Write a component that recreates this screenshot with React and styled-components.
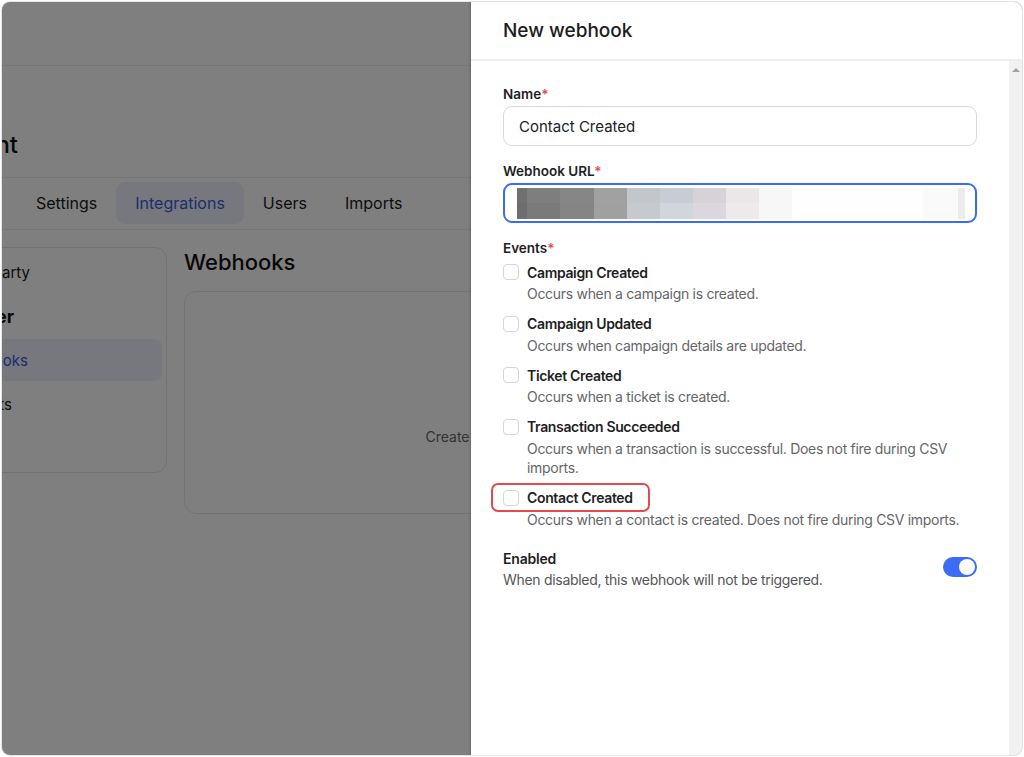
import React from 'react';
import styled, { createGlobalStyle } from 'styled-components';

const GlobalStyle = createGlobalStyle`
  * { box-sizing: border-box; }
  html, body { margin: 0; padding: 0; background: #ffffff; }
  body { font-family: 'Inter', 'Liberation Sans', sans-serif; }
`

const EVENTS = [
  { title: 'Campaign Created', desc: 'Occurs when a campaign is created.' },
  { title: 'Campaign Updated', desc: 'Occurs when campaign details are updated.' },
  { title: 'Ticket Created', desc: 'Occurs when a ticket is created.' },
  { title: 'Transaction Succeeded', desc: 'Occurs when a transaction is successful. Does not fire during CSV imports.' },
  { title: 'Contact Created', desc: 'Occurs when a contact is created. Does not fire during CSV imports.', marked: true },
]

// pixelated url: [width, top colour, bottom colour]
const BLUR = [
  [10, '#707070', '#6e6e6e'],
  [33, '#7e7e7e', '#7a7a7a'],
  [34, '#868686', '#858585'],
  [33, '#a1a1a1', '#a0a0a0'],
  [33, '#c3c6cb', '#c6c9cd'],
  [33, '#c8cdd5', '#d1d5dc'],
  [33, '#d7d2d7', '#dcd7dc'],
  [33, '#ebe7e8', '#eeeaeb'],
  [33, '#f8f7f8', '#f8f7f8'],
  [131, '#fefefe', '#fefefe'],
  [35, '#fafafa', '#fafafa'],
  [7, '#ececec', '#ececec'],
]

export default class App extends React.Component {

  renderEvent = (item) => {
    return (
      <EventItem key={item.title}>
        <EventHead>
          <Checkbox />
          <EventTitle>{item.title}</EventTitle>
          {item.marked ? <Marker /> : null}
        </EventHead>
        <EventDesc>{item.desc}</EventDesc>
      </EventItem>
    )
  }

  renderBackground = () => {
    return (
      <Page>
        <TopBar />
        <TitleRow>
          <ClipStart $end={16}>
            <PageTitle>Event Management</PageTitle>
          </ClipStart>
        </TitleRow>
        <Tabs>
          <Tab>Settings</Tab>
          <Tab $active>Integrations</Tab>
          <Tab>Users</Tab>
          <Tab>Imports</Tab>
        </Tabs>
        <Content>
          <SideCard>
            <SideItem><ClipStart $end={43}><SideText>Third party</SideText></ClipStart></SideItem>
            <SideItem><ClipStart $end={27}><SideHeading>Developer</SideHeading></ClipStart></SideItem>
            <SideItem $active><ClipStart $end={41}><SideText $active>Webhooks</SideText></ClipStart></SideItem>
            <SideItem><ClipStart $end={25}><SideText>Exports</SideText></ClipStart></SideItem>
          </SideCard>
          <Main>
            <MainTitle>Webhooks</MainTitle>
            <EmptyCard>
              <EmptyText>Create a webhook to get started.</EmptyText>
            </EmptyCard>
          </Main>
        </Content>
      </Page>
    )
  }

  render() {
    return (
      <Frame>
        <GlobalStyle />
        {this.renderBackground()}
        <Overlay />
        <Drawer>
          <DrawerHeader>New webhook</DrawerHeader>
          <DrawerBody>
            <Form>
              <Field>
                <Label>Name<Req>*</Req></Label>
                <Input>Contact Created</Input>
              </Field>
              <Field>
                <Label>Webhook URL<Req>*</Req></Label>
                <Input $focused>
                  <Blur>
                    <BlurRow>{BLUR.map((b, i) => <BlurCell key={i} $w={b[0]} $c={b[1]} />)}</BlurRow>
                    <BlurRow>{BLUR.map((b, i) => <BlurCell key={i} $w={b[0]} $c={b[2]} />)}</BlurRow>
                  </Blur>
                </Input>
              </Field>
              <Field>
                <Label>Events<Req>*</Req></Label>
                <EventList>
                  {EVENTS.map(this.renderEvent)}
                </EventList>
              </Field>
              <EnabledRow>
                <EnabledText>
                  <EnabledTitle>Enabled</EnabledTitle>
                  <EnabledDesc>When disabled, this webhook will not be triggered.</EnabledDesc>
                </EnabledText>
                <Toggle><Knob /></Toggle>
              </EnabledRow>
            </Form>
            <ScrollTrack><ScrollArrow /></ScrollTrack>
          </DrawerBody>
        </Drawer>
      </Frame>
    )
  }
}

const Frame = styled.div`
  position: relative;
  width: 1022px;
  height: 755px;
  margin: 1px 0 0 1px;
  border: 1px solid #e3e4ec;
  border-radius: 9px;
  overflow: hidden;
  background: #ffffff;
`

/* ---- page behind the overlay ---- */

const Page = styled.div`
  width: 100%;
  height: 100%;
  display: flex;
  flex-direction: column;
  color: #111111;
`

const TopBar = styled.div`
  height: 64px;
  flex: none;
  border-bottom: 1px solid #ececec;
`

const TitleRow = styled.div`
  padding-top: 63px;
  height: 111px;
  flex: none;
`

// right-anchored box: whatever does not fit overflows to the left, off the page
const ClipStart = styled.div`
  width: ${p => p.$end}px;
  flex: none;
  display: flex;
  justify-content: flex-end;
  white-space: nowrap;
`

const PageTitle = styled.div`
  font-size: 24px;
  line-height: 32px;
  font-weight: 500;
`

const Tabs = styled.div`
  flex: none;
  display: flex;
  padding: 4px 0 5px 15px;
  border-top: 1px solid #ececec;
  border-bottom: 1px solid #ececec;
`

const Tab = styled.div`
  height: 42px;
  padding: 0 19px;
  display: flex;
  align-items: center;
  border-radius: 9px;
  font-size: 16px;
  color: ${p => p.$active ? '#3d5bd9' : '#1a1a1a'};
  background: ${p => p.$active ? '#eef1fa' : 'transparent'};
`

const Content = styled.div`
  display: flex;
  align-items: flex-start;
  gap: 17px;
  padding-top: 17px;
`

const SideCard = styled.div`
  margin-left: -20px;
  width: 185px;
  height: 226px;
  flex: none;
  padding: 3px 4px;
  border: 1px solid #e6e6e6;
  border-radius: 12px;
  display: flex;
  flex-direction: column;
  gap: 2px;
`

const SideItem = styled.div`
  height: 42px;
  display: flex;
  align-items: center;
  border-radius: 8px;
  background: ${p => p.$active ? '#eef1fa' : 'transparent'};
`

const SideText = styled.div`
  font-size: 15px;
  color: ${p => p.$active ? '#3d5bd9' : '#1a1a1a'};
`

const SideHeading = styled.div`
  font-size: 18px;
  font-weight: 700;
`

const Main = styled.div`
  display: flex;
  flex-direction: column;
`

const MainTitle = styled.div`
  font-size: 22px;
  line-height: 30px;
  font-weight: 500;
  margin-bottom: 14px;
`

const EmptyCard = styled.div`
  width: 700px;
  height: 223px;
  border: 1px solid #e6e6e6;
  border-radius: 12px;
  display: flex;
  justify-content: center;
  padding-top: 135px;
`

const EmptyText = styled.div`
  font-size: 14px;
  line-height: 20px;
  color: #666666;
`

const Overlay = styled.div`
  position: absolute;
  inset: 0;
  background: rgba(0, 0, 0, 0.5);
`

/* ---- drawer ---- */

const Drawer = styled.div`
  position: absolute;
  top: 0;
  right: 0;
  bottom: 0;
  width: 551px;
  background: #ffffff;
  display: flex;
  flex-direction: column;
  box-shadow: -1px 0 2px rgba(0, 0, 0, 0.18);
`

const DrawerHeader = styled.div`
  height: 59px;
  flex: none;
  padding-left: 32px;
  display: flex;
  align-items: center;
  font-size: 19px;
  font-weight: 500;
  color: #1c1c1c;
  border-bottom: 2px solid #eeeef0;
`

const DrawerBody = styled.div`
  flex: 1;
  display: flex;
  min-height: 0;
`

const Form = styled.div`
  flex: 1;
  min-width: 0;
  padding: 24px 32px;
  display: flex;
  flex-direction: column;
  gap: 16px;
`

const Field = styled.div`
  display: flex;
  flex-direction: column;
  gap: 3px;
`

const Label = styled.div`
  font-size: 13.5px;
  line-height: 18px;
  font-weight: 600;
  color: #1f1f1f;
`

const Req = styled.span`
  color: #e5484d;
`

const Input = styled.div`
  height: 40px;
  display: flex;
  align-items: center;
  padding: ${p => p.$focused ? '0 8px 0 12px' : '0 15px'};
  border: ${p => p.$focused ? '2px solid #3a6cf5' : '1px solid #d9d9dc'};
  border-radius: 9px;
  font-size: 15px;
  color: #222222;
`

const Blur = styled.div`
  flex: 1;
  min-width: 0;
  display: flex;
  flex-direction: column;
  height: 31px;
  overflow: hidden;
`

const BlurRow = styled.div`
  display: flex;
  flex: 1;
`

const BlurCell = styled.div`
  width: ${p => p.$w}px;
  flex: none;
  background: ${p => p.$c};
`

const EventList = styled.div`
  display: flex;
  flex-direction: column;
  gap: 10px;
  margin-top: 2px;
`

const EventItem = styled.div`
  display: flex;
  flex-direction: column;
  gap: 2px;
`

const EventHead = styled.div`
  position: relative;
  display: flex;
  align-items: center;
  gap: 8px;
  height: 20px;
`

const Checkbox = styled.span`
  width: 16px;
  height: 16px;
  flex: none;
  border: 1px solid #d6d6d9;
  border-radius: 4px;
  background: #ffffff;
`

const EventTitle = styled.div`
  font-size: 14px;
  font-weight: 600;
  letter-spacing: -0.35px;
  color: #1f1f1f;
`

// red annotation drawn round the item
const Marker = styled.span`
  position: absolute;
  left: -12px;
  top: -5px;
  width: 159px;
  height: 29px;
  border: 2px solid #e5484d;
  border-radius: 7px;
`

const EventDesc = styled.div`
  padding-left: 24px;
  font-size: 14px;
  line-height: 19.5px;
  letter-spacing: -0.3px;
  color: #666668;
`

const EnabledRow = styled.div`
  display: flex;
  justify-content: space-between;
  align-items: flex-start;
  margin-top: 4px;
`

const EnabledText = styled.div`
  display: flex;
  flex-direction: column;
  gap: 1px;
`

const EnabledTitle = styled.div`
  font-size: 14px;
  line-height: 20px;
  font-weight: 600;
  letter-spacing: -0.2px;
  color: #1f1f1f;
`

const EnabledDesc = styled.div`
  font-size: 14px;
  line-height: 20px;
  letter-spacing: -0.3px;
  color: #555558;
`

const Toggle = styled.div`
  width: 34px;
  height: 20px;
  margin-top: 8px;
  border-radius: 10px;
  background: #3a6cf5;
  display: flex;
  align-items: center;
  justify-content: flex-end;
  padding: 2px;
`

const Knob = styled.span`
  width: 16px;
  height: 16px;
  border-radius: 50%;
  background: #ffffff;
`

const ScrollTrack = styled.div`
  width: 13px;
  flex: none;
  background: #f1f1f2;
  display: flex;
  justify-content: center;
`

const ScrollArrow = styled.span`
  margin-top: 7px;
  width: 0;
  height: 0;
  border-left: 4px solid transparent;
  border-right: 4px solid transparent;
  border-bottom: 4px solid #a3a3a3;
`
